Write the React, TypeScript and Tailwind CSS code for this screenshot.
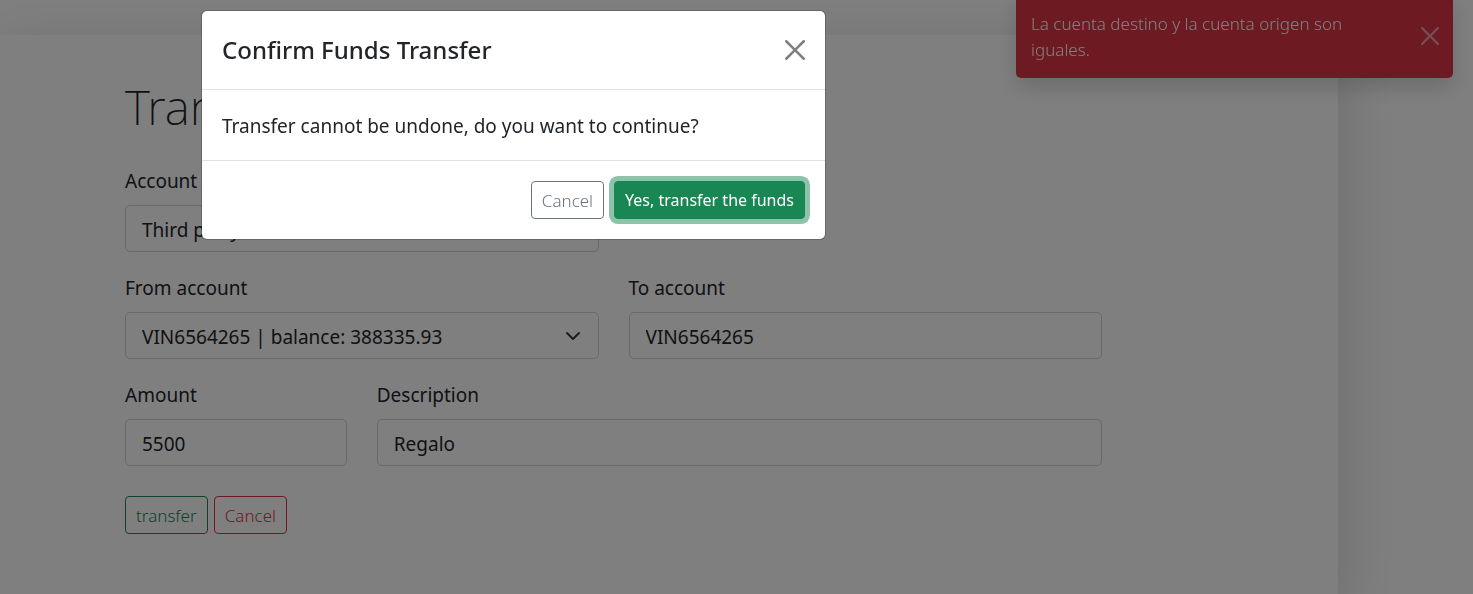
import { type ReactNode } from "react";

function CloseIcon({ className }: { className: string }) {
  return (
    <svg viewBox="0 0 16 16" fill="currentColor" aria-hidden="true" className={className}>
      <path d="M.293.293a1 1 0 0 1 1.414 0L8 6.586 14.293.293a1 1 0 1 1 1.414 1.414L9.414 8l6.293 6.293a1 1 0 0 1-1.414 1.414L8 9.414l-6.293 6.293a1 1 0 0 1-1.414-1.414L6.586 8 .293 1.707a1 1 0 0 1 0-1.414z" />
    </svg>
  );
}

const controlClass =
  "h-[47px] w-full rounded-[5px] border border-[#ced4da] bg-white px-4 pt-[2px] text-[19px] leading-7 text-[#212529]";

const buttonClass = "h-[38px] rounded-[4px] border px-[10px]";
const outlineButtonClass = `${buttonClass} pt-[2px] text-[17px] font-light`;

function Field({
  id,
  label,
  className,
  children,
}: {
  id: string;
  label: string;
  className: string;
  children: ReactNode;
}) {
  return (
    <div className={className}>
      <label htmlFor={id} className="mb-2 block leading-8">
        {label}
      </label>
      {children}
    </div>
  );
}

function Select({ id, value }: { id: string; value: string }) {
  return (
    <div className="grid items-center">
      <select id={id} className={`${controlClass} col-start-1 row-start-1 appearance-none`}>
        <option>{value}</option>
      </select>
      <svg
        viewBox="0 0 16 16"
        fill="none"
        stroke="#343a40"
        strokeWidth="2"
        strokeLinecap="round"
        strokeLinejoin="round"
        aria-hidden="true"
        className="pointer-events-none col-start-1 row-start-1 mr-[18px] size-4 justify-self-end"
      >
        <path d="m2 5 6 6 6-6" />
      </svg>
    </div>
  );
}

function TransferForm() {
  return (
    <main className="mt-[35px] mr-[135px] min-h-[calc(100vh-35px)] bg-white pt-[42px] pr-[236px] pb-[60px] pl-[125px] shadow-[0_20px_60px_rgba(0,0,0,0.175)]">
      <h1 className="mb-7 text-[48px] leading-[60px] font-extralight">Transfer</h1>
      <form>
        <div className="grid grid-cols-4 gap-x-[30px] gap-y-5">
          <Field id="account-type" label="Account type" className="col-span-2 col-start-1">
            <Select id="account-type" value="Third party" />
          </Field>
          <Field id="from" label="From account" className="col-span-2 col-start-1">
            <Select id="from" value="VIN6564265 | balance: 388335.93" />
          </Field>
          <Field id="to" label="To account" className="col-span-2">
            <input id="to" defaultValue="VIN6564265" className={controlClass} />
          </Field>
          <Field id="amount" label="Amount" className="col-span-1">
            <input id="amount" defaultValue="5500" className={controlClass} />
          </Field>
          <Field id="description" label="Description" className="col-span-3">
            <input id="description" defaultValue="Regalo" className={controlClass} />
          </Field>
        </div>
        <div className="mt-[30px] flex gap-[6px]">
          <button type="button" className={`${outlineButtonClass} border-[#198754] text-[#198754]`}>
            transfer
          </button>
          <button type="button" className={`${outlineButtonClass} border-[#dc3545] text-[#dc3545]`}>
            Cancel
          </button>
        </div>
      </form>
    </main>
  );
}

function Toast() {
  return (
    <div
      role="alert"
      className="fixed -top-[6px] right-5 flex w-[437px] items-center rounded-[5px] bg-[#dc3545] text-[17px] leading-[26px] font-light text-white shadow-[0_10px_20px_rgba(0,0,0,0.15)]"
    >
      <p className="flex-1 pt-[17px] pr-[60px] pb-[15px] pl-[15px]">
        La cuenta destino y la cuenta origen son iguales.
      </p>
      <button type="button" aria-label="Close notification" className="mr-[14px] opacity-50">
        <CloseIcon className="size-[18px]" />
      </button>
    </div>
  );
}

function ConfirmDialog() {
  return (
    <div className="fixed inset-0 bg-black/50 pt-[10px] pl-[201px]">
      <section
        role="dialog"
        aria-modal="true"
        aria-labelledby="confirm-title"
        className="w-full max-w-[625px] rounded-[6px] border border-black/20 bg-white bg-clip-padding"
      >
        <header className="flex items-center justify-between border-b border-[#dee2e6] p-5">
          <h2 id="confirm-title" className="text-[24px] leading-[38px] font-medium">
            Confirm Funds Transfer
          </h2>
          <button type="button" aria-label="Close" className="text-black opacity-50">
            <CloseIcon className="size-5" />
          </button>
        </header>
        <p className="px-5 pt-[21px] pb-[19px] leading-[30px]">
          Transfer cannot be undone, do you want to continue?
        </p>
        <footer className="flex justify-end gap-[10px] border-t border-[#dee2e6] p-5">
          <button type="button" className={`${outlineButtonClass} border-[#6c757d] text-[#6c757d]`}>
            Cancel
          </button>
          <button
            type="button"
            className={`${buttonClass} border-[#198754] bg-[#198754] text-[16px] text-white ring-[5px] ring-[#198754]/50`}
          >
            Yes, transfer the funds
          </button>
        </footer>
      </section>
    </div>
  );
}

export default function App() {
  return (
    <div className="flow-root min-h-screen overflow-hidden bg-white font-['Noto_Sans','Open_Sans',sans-serif] text-[19px] text-[#212529]">
      <TransferForm />
      <Toast />
      <ConfirmDialog />
    </div>
  );
}
